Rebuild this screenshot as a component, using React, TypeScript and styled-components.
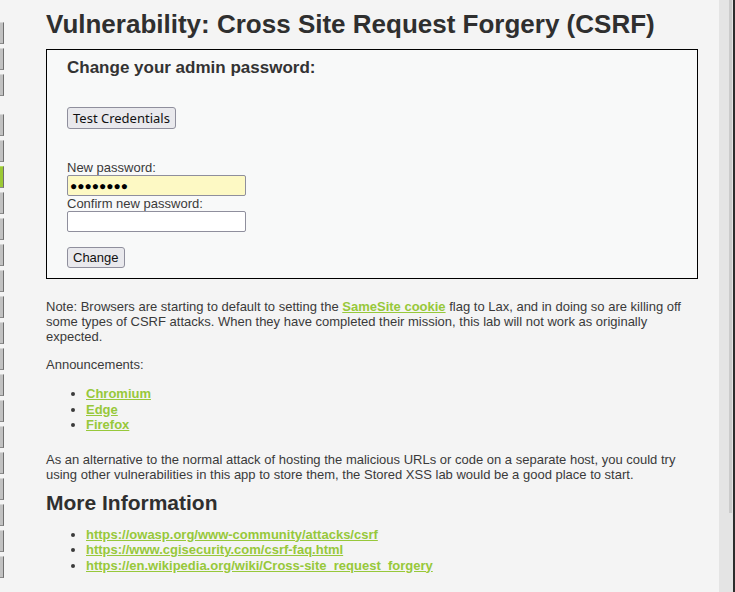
import styled, { createGlobalStyle } from 'styled-components';

const GlobalStyle = createGlobalStyle`
  html, body {
    margin: 0;
    padding: 0;
    background: #f4f4f4;
  }
  body {
    font-family: "Liberation Sans", Arial, sans-serif;
    font-size: 13px;
    color: #3a3a3a;
  }
`;

const green = '#97c83a';

const Page = styled.div`
  display: flex;
  height: 592px;
  overflow: hidden;
`;

const Menu = styled.div`
  width: 4px;
  flex-shrink: 0;
  padding-top: 22px;
`;

const MenuGroup = styled.ul`
  list-style: none;
  margin: 0 0 18px 0;
  padding: 0;
  display: flex;
  flex-direction: column;
  gap: 4px;
`;

const MenuItem = styled.li<{ $active?: boolean }>`
  height: 20px;
  background: ${({ $active }) => ($active ? '#9cc935' : '#c1c1c1')};
  border-top: 1px solid ${({ $active }) => ($active ? '#b9de62' : '#d8d8d8')};
  border-bottom: 1px solid #8a8a8a;
  border-right: 1px solid #6f6f6f;
  box-sizing: content-box;
  width: 3px;
`;

const Main = styled.div`
  flex: 1;
  padding: 0 21px 0 42px;
  min-width: 0;
`;

const Title = styled.h1`
  font-size: 26px;
  line-height: 30px;
  font-weight: bold;
  color: #2f2f2f;
  margin: 9px 0 10px;
`;

const Box = styled.div`
  border: 1px solid #000;
  background: #f8f9f9;
  padding: 8px 20px 10px;
`;

const BoxHeading = styled.h3`
  font-size: 17px;
  line-height: 20px;
  font-weight: bold;
  color: #333;
  margin: 0 0 29px;
`;

const Form = styled.form`
  display: flex;
  flex-direction: column;
  align-items: flex-start;
`;

const Spacer = styled.div<{ $h: number }>`
  height: ${({ $h }) => $h}px;
`;

const Button = styled.button<{ $sys?: boolean }>`
  font-family: ${({ $sys }) => ($sys ? '"Noto Sans", "DejaVu Sans", sans-serif' : '"Liberation Sans", Arial, sans-serif')};
  font-size: 13px;
  color: #111;
  background: #e9e9ed;
  border: 1px solid #8f8f9d;
  border-radius: 3px;
  height: ${({ $sys }) => ($sys ? '22px' : '21px')};
  padding: 0 5px;
  line-height: 1;
`;

const Label = styled.label`
  font-size: 13px;
  line-height: 15px;
  color: #3a3a3a;
`;

const Input = styled.input<{ $filled?: boolean }>`
  width: 179px;
  height: 21px;
  box-sizing: border-box;
  border: 1px solid #8f8f9d;
  border-radius: 2px;
  background: ${({ $filled }) => ($filled ? '#fdf9c4' : '#fff')};
  font-family: "Liberation Sans", Arial, sans-serif;
  font-size: ${({ $filled }) => ($filled ? '12px' : '13px')};
  color: #000;
  padding: 0 2px;
  margin: 0;
`;

const Para = styled.p<{ $top?: number }>`
  margin: ${({ $top }) => $top ?? 13}px 0 0;
  line-height: 15px;
`;

const List = styled.ul<{ $top?: number }>`
  margin: ${({ $top }) => $top ?? 14}px 0 0;
  padding-left: 40px;
  line-height: 15.5px;
`;

const Link = styled.a`
  color: ${green};
  font-weight: bold;
  text-decoration: underline;
`;

const SubHeading = styled.h2`
  font-size: 21px;
  line-height: 24px;
  font-weight: bold;
  color: #2f2f2f;
  margin: 9px 0 0;
`;

const Gutter = styled.div`
  width: 14px;
  flex-shrink: 0;
  background: #e4e4e4;
  display: flex;
  justify-content: flex-end;
  padding-right: 1px;
  box-sizing: border-box;
`;

const Thumb = styled.div`
  width: 3px;
  height: 513px;
  background: #cbcbcb;
`;

const Edge = styled.div`
  width: 2px;
  flex-shrink: 0;
  background: #2d2d2d;
`;

const App = () => {
  const lower = Array.from({ length: 18 }, (_, i) => i);
  return (
    <>
      <GlobalStyle />
      <Page>
        <Menu>
          <MenuGroup>
            <MenuItem />
            <MenuItem />
            <MenuItem />
          </MenuGroup>
          <MenuGroup>
            {lower.map((i) => (
              <MenuItem key={i} $active={i === 2} />
            ))}
          </MenuGroup>
        </Menu>
        <Main>
          <Title>Vulnerability: Cross Site Request Forgery (CSRF)</Title>
          <Box>
            <BoxHeading>Change your admin password:</BoxHeading>
            <Form onSubmit={(e) => e.preventDefault()}>
              <Button type="button" $sys>Test Credentials</Button>
              <Spacer $h={31} />
              <Label>New password:</Label>
              <Input type="text" readOnly defaultValue="●●●●●●●●" $filled />
              <Label>Confirm new password:</Label>
              <Input type="password" />
              <Spacer $h={15} />
              <Button type="submit">Change</Button>
            </Form>
          </Box>
          <Para $top={20}>
            Note: Browsers are starting to default to setting the <Link href="#">SameSite cookie</Link> flag to Lax, and in
            doing so are killing off some types of CSRF attacks. When they have completed their mission, this lab will not
            work as originally expected.
          </Para>
          <Para>Announcements:</Para>
          <List>
            <li><Link href="#">Chromium</Link></li>
            <li><Link href="#">Edge</Link></li>
            <li><Link href="#">Firefox</Link></li>
          </List>
          <Para $top={19}>
            As an alternative to the normal attack of hosting the malicious URLs or code on a separate host, you could try
            using other vulnerabilities in this app to store them, the Stored XSS lab would be a good place to start.
          </Para>
          <SubHeading>More Information</SubHeading>
          <List $top={12}>
            <li><Link href="#">https://owasp.org/www-community/attacks/csrf</Link></li>
            <li><Link href="#">https://www.cgisecurity.com/csrf-faq.html</Link></li>
            <li><Link href="#">https://en.wikipedia.org/wiki/Cross-site_request_forgery</Link></li>
          </List>
        </Main>
        <Gutter>
          <Thumb />
        </Gutter>
        <Edge />
      </Page>
    </>
  );
};

export default App;
